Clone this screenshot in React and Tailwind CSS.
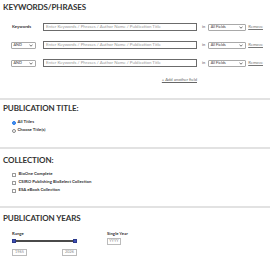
import React from 'react';

const placeholder = 'Enter Keywords / Phrases / Author Name / Publication Title';

const FieldSelect = ({ label, width }) => (
  <div className={`${width} h-[7px] border border-[#a9a9a9] rounded-[1px] flex items-center justify-between px-[1.5px] bg-white`}>
    <span className="text-[3.8px] leading-none text-[#333]">{label}</span>
    <svg width="4" height="3" viewBox="0 0 4 3" className="mr-[1px]">
      <path d="M0.5 0.8 L2 2.2 L3.5 0.8" fill="none" stroke="#333" strokeWidth="0.7" />
    </svg>
  </div>
);

const SearchRow = ({ first }) => (
  <div className="flex items-center h-[8px]">
    <div className="w-[32px] flex items-center">
      {first ? (
        <span className="pl-[1px] text-[4.3px] leading-none font-bold text-[#333]">Keywords</span>
      ) : (
        <FieldSelect label="AND" width="w-[25px]" />
      )}
    </div>
    <div className="w-[154px] h-[8px] border border-[#6b6b6b] flex items-center pl-[2px] bg-white">
      <span className="text-[4.4px] leading-none text-[#9a9a9a] whitespace-nowrap">{placeholder}</span>
    </div>
    <span className="ml-[5px] text-[4px] leading-none text-[#555]">in</span>
    <div className="ml-[3px]">
      <FieldSelect label="All Fields" width="w-[38px]" />
    </div>
    <span className="ml-[2px] text-[4.2px] leading-none text-[#777] underline">Remove</span>
  </div>
);

const Heading = ({ children }) => (
  <h2 className="pl-[3px] text-[8px] leading-[8px] font-bold text-[#333] tracking-[-0.1px]">{children}</h2>
);

const Divider = () => <div className="h-[2px] w-[270px] bg-[#e2e2e2]" />;

const Radio = ({ checked, label }) => (
  <div className="flex items-center h-[8px] pl-[12px] gap-[1.5px]">
    <span className={`w-[4px] h-[4px] rounded-full border ${checked ? 'border-[#1a73e8] bg-white' : 'border-[#888] bg-white'} flex items-center justify-center`}>
      {checked && <span className="w-[2px] h-[2px] rounded-full bg-[#1a73e8]" />}
    </span>
    <span className="text-[4.3px] leading-none font-bold text-[#333]">{label}</span>
  </div>
);

const Check = ({ label }) => (
  <div className="flex items-center h-[8px] pl-[12px] gap-[2.5px]">
    <span className="w-[4px] h-[4px] border border-[#999] rounded-[0.5px] bg-white" />
    <span className="text-[4.3px] leading-none font-bold text-[#333]">{label}</span>
  </div>
);

const YearBox = ({ value, width }) => (
  <div className={`${width} h-[7px] border border-[#bbb] flex items-center justify-center`}>
    <span className="text-[3.8px] leading-none text-[#888]">{value}</span>
  </div>
);

export default function App() {
  return (
    <div className="w-[271px] h-[263px] bg-white overflow-hidden font-['Lato','Liberation_Sans',sans-serif]">
      {/* Keywords */}
      <div className="pt-[2.5px]">
        <Heading>KEYWORDS/PHRASES</Heading>
        <div className="mt-[12.5px] pl-[11px] flex flex-col gap-[10px]">
          <SearchRow first />
          <SearchRow />
          <SearchRow />
        </div>
        <div className="w-[197px] flex justify-end mt-[10.5px] h-[5px] items-center">
          <span className="text-[4.2px] leading-none text-[#666] underline">+ Add another field</span>
        </div>
      </div>
      <div className="mt-[15px]">
        <Divider />
      </div>

      {/* Publication title */}
      <div className="pt-[4.5px]">
        <Heading>PUBLICATION TITLE:</Heading>
        <div className="mt-[6.5px]">
          <Radio checked label="All Titles" />
          <Radio label="Choose Title(s)" />
        </div>
      </div>
      <div className="mt-[12px]">
        <Divider />
      </div>

      {/* Collection */}
      <div className="pt-[7.5px]">
        <Heading>COLLECTION:</Heading>
        <div className="mt-[6.5px]">
          <Check label="BioOne Complete" />
          <Check label="CSIRO Publishing BioSelect Collection" />
          <Check label="ESA eBook Collection" />
        </div>
      </div>
      <div className="mt-[11px]">
        <Divider />
      </div>

      {/* Publication years */}
      <div className="pt-[6.5px]">
        <Heading>PUBLICATION YEARS</Heading>
        <div className="mt-[9px] pl-[12px] flex">
          <div className="w-[65px]">
            <div className="text-[4.3px] leading-[5px] font-bold text-[#333]">Range</div>
            <div className="relative mt-[2.5px] h-[4px] flex items-center">
              <div className="h-[2px] w-full bg-[#4a4a4a]" />
              <span className="absolute left-0 top-0 w-[4px] h-[4px] bg-[#3f51b5] border border-[#2c3a8c]" />
              <span className="absolute right-0 top-0 w-[4px] h-[4px] bg-[#3f51b5] border border-[#2c3a8c]" />
            </div>
            <div className="mt-[6px] flex justify-between">
              <YearBox value="1965" width="w-[15px]" />
              <YearBox value="2026" width="w-[15px]" />
            </div>
          </div>
          <div className="ml-[30px]">
            <div className="text-[4.3px] leading-[5px] font-bold text-[#333]">Single Year</div>
            <div className="mt-[1.5px]">
              <YearBox value="YYYY" width="w-[14px]" />
            </div>
          </div>
        </div>
      </div>
    </div>
  );
}
